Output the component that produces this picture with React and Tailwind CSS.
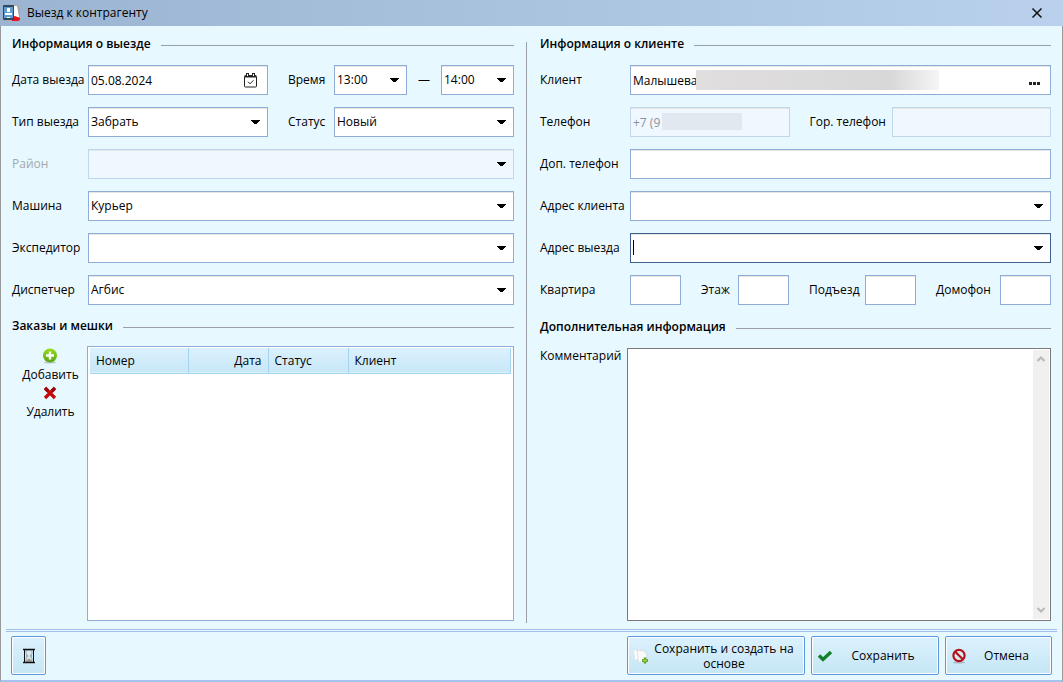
import { useState } from 'react';
import clsx from 'clsx';

const FIELD = 'h-[30px] w-full border px-[2px] outline-none shadow-[inset_0_1px_0_#e6e6e6]';
const FIELD_COLOR = 'border-[#8facd8] bg-white text-black';
const FIELD_FOCUS = 'border-[#3f618f] bg-white text-black';
const FIELD_DISABLED = 'border-[#c0d6ec] bg-[#f0f8ff] text-[#8b929b]';

function AppIcon() {
  return (
    <svg width="18" height="18" viewBox="0 0 18 18">
      <rect x="1" y="1" width="17" height="16" rx="3" fill="#a9a9a9" />
      <path d="M12 2h3l2 11h-5z" fill="#fff" />
      <path d="M10 13l3-1 5 2v2l-2 1h-6z" fill="#e8121c" />
      <rect x="1" y="1" width="11" height="15" rx="1" fill="#33475c" />
      <rect x="2" y="3" width="9" height="11" fill="#5f9bd0" />
      <rect x="5" y="4" width="3" height="4" fill="#fff" />
      <path d="M3 9h7v2H3zM5 13h3v1H5z" fill="#fff" />
    </svg>
  );
}

function CalendarIcon() {
  return (
    <svg width="14" height="15" viewBox="0 0 14 15" fill="none" stroke="#222">
      <rect x="0.5" y="2.5" width="12" height="11.5" rx="1" />
      <path d="M1 3.5h11" strokeWidth="2" />
      <path d="M3.5 0v4M9.5 0v4" strokeWidth="3" />
      <path d="M3.5 1v2M9.5 1v2" stroke="#fff" />
      <path d="M4 8.8l2 2 3.5-3.5" />
    </svg>
  );
}

function AddIcon() {
  return (
    <svg width="16" height="16" viewBox="0 0 16 16">
      <defs>
        <linearGradient id="add" x1="0" y1="0" x2="0" y2="1">
          <stop offset="0" stopColor="#97dc18" />
          <stop offset="1" stopColor="#57a51c" />
        </linearGradient>
      </defs>
      <ellipse cx="8" cy="14.5" rx="6" ry="1" fill="#b9c9cd" />
      <circle cx="8" cy="7.5" r="7" fill="url(#add)" />
      <path d="M8 3.5v8M4 7.5h8" stroke="#fff" strokeWidth="2.4" />
    </svg>
  );
}

function DeleteIcon() {
  return (
    <svg width="16" height="16" viewBox="0 0 16 16">
      <path d="M3 3l10 10M13 3L3 13" stroke="#c40808" strokeWidth="3.2" />
      <path d="M3 3l3 3M13 3l-3 3" stroke="#9b0a0a" strokeWidth="3.2" />
    </svg>
  );
}

function HourglassIcon() {
  return (
    <svg width="14" height="16" viewBox="0 0 14 16">
      <path d="M4 2h6v3.5L8 8l2 2.5V14H4v-3.5L6 8 4 5.500z" fill="#dbe8ee" stroke="#8296a0" strokeWidth="0.8" />
      <path d="M4 5.500L6 8l-2 2.500zM10 5.500L8 8l2 2.500z" fill="#9db2bc" />
      <path d="M4.500 14h5v-2L7 10.500l-2.500 1.500z" fill="#a09c8a" />
      <path d="M2.500 1v14M11.500 1v14" stroke="#111" />
      <path d="M1 1.500h12M1 14.500h12" stroke="#111" strokeWidth="1.6" />
    </svg>
  );
}

function CopyIcon() {
  return (
    <svg width="16" height="16" viewBox="0 0 16 16">
      <path d="M0.5 2.5l7-1.500 2 10-7.500 1z" fill="#fff" stroke="#dde3e6" strokeWidth="0.8" />
      <path d="M4 2.500h6l3.500 3V13l-8 1.500z" fill="#fafafa" stroke="#d3d9dc" strokeWidth="0.8" />
      <path d="M12 9.500v6M9 12.500h6" stroke="#4f9616" strokeWidth="2.4" />
      <path d="M12 10.500v4M10 12.500h4" stroke="#b5e34c" strokeWidth="0.8" />
    </svg>
  );
}

function CheckIcon() {
  return (
    <svg width="16" height="16" viewBox="0 0 16 16">
      <path d="M2 7.5l4 4 8-7.5" fill="none" stroke="#14802b" strokeWidth="3.4" />
    </svg>
  );
}

function ForbiddenIcon() {
  return (
    <svg width="16" height="16" viewBox="0 0 16 16">
      <ellipse cx="8" cy="14.5" rx="6" ry="1" fill="#a9b9c0" />
      <circle cx="8" cy="7.5" r="5.6" fill="#dceaf1" stroke="#b3141c" strokeWidth="2.2" />
      <path d="M4.2 3.7l7.6 7.6" stroke="#b3141c" strokeWidth="2.2" />
    </svg>
  );
}

function Arrow() {
  return (
    <svg
      className="pointer-events-none absolute top-[13px] right-2"
      width="9"
      height="5"
      viewBox="0 0 9 5"
      shapeRendering="crispEdges"
    >
      <path d="M0 0h9v1H8v1H7v1H6v1H3V3H2V2H1V1H0z" fill="#000" />
    </svg>
  );
}

function Section({ title, className }) {
  return (
    <div className={clsx('flex h-5 items-center gap-[10px]', className)}>
      <h2 className="font-semibold whitespace-nowrap">{title}</h2>
      <div className="mt-[2px] h-px flex-1 bg-[#9a9fac]" />
    </div>
  );
}

function Label({ id, className, children }) {
  return (
    <label htmlFor={id} className={clsx('shrink-0 whitespace-nowrap', className)}>
      {children}
    </label>
  );
}

function Input({ id, value = '', disabled, className }) {
  return (
    <div className={clsx('min-w-0', className)}>
      <input
        id={id}
        type="text"
        defaultValue={value}
        disabled={disabled}
        className={clsx(FIELD, disabled ? FIELD_DISABLED : FIELD_COLOR)}
      />
    </div>
  );
}

function Select({ id, options = [''], disabled, label, className }) {
  return (
    <div className={clsx('relative min-w-0', className)}>
      <select
        id={id}
        aria-label={label}
        disabled={disabled}
        className={clsx(FIELD, 'appearance-none opacity-100', disabled ? FIELD_DISABLED : FIELD_COLOR)}
      >
        {options.map((o) => (
          <option key={o}>{o}</option>
        ))}
      </select>
      <Arrow />
    </div>
  );
}

function ActionButton({ icon, label, className, children }) {
  return (
    <button
      type="button"
      aria-label={label}
      className={clsx(
        'flex h-[39px] items-center rounded-xs border border-[#5c97dd] bg-linear-to-b from-[#dcf1fe] to-[#c5e6f5] leading-[15px] shadow-[inset_0_0_0_1px_#fff]',
        className
      )}
    >
      {icon}
      {children && <span className="flex-1 text-center">{children}</span>}
    </button>
  );
}

function TripInfo() {
  const row = 'flex items-center';
  return (
    <div className="flex flex-col gap-3">
      <div className={row}>
        <Label id="date" className="w-[76px]">Дата выезда</Label>
        <div className="relative min-w-0 flex-1">
          <input id="date" type="text" defaultValue="05.08.2024" className={clsx(FIELD, FIELD_COLOR)} />
          <button type="button" aria-label="Календарь" className="absolute top-2 right-[10px]">
            <CalendarIcon />
          </button>
        </div>
        <Label id="timeFrom" className="ml-5 w-[46px]">Время</Label>
        <div className="flex flex-1 items-center justify-between">
          <Select id="timeFrom" options={['13:00']} className="w-[73px]" />
          <span>—</span>
          <Select label="Время до" options={['14:00']} className="w-[73px]" />
        </div>
      </div>
      <div className={row}>
        <Label id="type" className="w-[76px]">Тип выезда</Label>
        <Select id="type" options={['Забрать']} className="flex-1" />
        <Label id="status" className="ml-5 w-[46px]">Статус</Label>
        <Select id="status" options={['Новый']} className="flex-1" />
      </div>
      <div className={row}>
        <Label id="district" className="w-[76px] text-[#a3a9ad]">Район</Label>
        <Select id="district" disabled className="flex-1" />
      </div>
      <div className={row}>
        <Label id="car" className="w-[76px]">Машина</Label>
        <Select id="car" options={['Курьер']} className="flex-1" />
      </div>
      <div className={row}>
        <Label id="forwarder" className="w-[76px]">Экспедитор</Label>
        <Select id="forwarder" className="flex-1" />
      </div>
      <div className={row}>
        <Label id="dispatcher" className="w-[76px]">Диспетчер</Label>
        <Select id="dispatcher" options={['Агбис']} className="flex-1" />
      </div>
    </div>
  );
}

function Orders() {
  const th = 'border-r border-[#a5d4ee] px-[6px] pt-[2px] font-normal';
  return (
    <div className="flex flex-1">
      <div className="flex w-[75px] shrink-0 flex-col items-center pt-[2px] pl-[2px]">
        <button type="button" className="flex h-[37px] flex-col items-center leading-[21px]">
          <AddIcon />
          Добавить
        </button>
        <button type="button" className="flex h-[37px] flex-col items-center leading-[21px]">
          <DeleteIcon />
          Удалить
        </button>
      </div>
      <div className="flex-1 border border-[#8facd8] bg-white px-[2px] pt-px">
        <table className="w-full table-fixed border-collapse">
          <thead>
            <tr className="h-[25px] border-b border-[#a5d4ee] bg-linear-to-b from-[#dcf1fe] to-[#c7e7f7]">
              <th className={clsx(th, 'w-[98px] text-left')}>Номер</th>
              <th className={clsx(th, 'w-[80px] text-right')}>Дата</th>
              <th className={clsx(th, 'w-[80px] text-left')}>Статус</th>
              <th className={clsx(th, 'text-left')}>Клиент</th>
            </tr>
          </thead>
          <tbody />
        </table>
      </div>
    </div>
  );
}

function ClientInfo() {
  const [address, setAddress] = useState('');
  const row = 'flex items-center';
  return (
    <div className="flex flex-col gap-3">
      <div className={row}>
        <Label id="client" className="w-[90px]">Клиент</Label>
        <div className="relative min-w-0 flex-1">
          <input id="client" type="text" defaultValue="Малышева" className={clsx(FIELD, FIELD_COLOR)} />
          {/* hidden part of the name */}
          <div className="absolute top-[5px] left-[66px] h-5 w-[243px] bg-linear-to-r from-[#e0dedf] via-[#d9d8d9] via-80% to-[#f5f5f5]" />
          <button type="button" aria-label="Выбрать клиента" className="absolute top-[17px] right-[11px] flex gap-px">
            <span className="size-[3px] bg-[#222]" />
            <span className="size-[3px] bg-[#222]" />
            <span className="size-[3px] bg-[#222]" />
          </button>
        </div>
      </div>
      <div className={row}>
        <Label id="phone" className="w-[90px]">Телефон</Label>
        <div className="relative min-w-0 flex-1">
          <input id="phone" type="text" disabled defaultValue="+7 (9" className={clsx(FIELD, FIELD_DISABLED)} />
          <div className="absolute top-[6px] left-[32px] h-[17px] w-[80px] bg-[#e1e8f0]" />
        </div>
        <Label id="cityPhone" className="ml-5 w-[82px]">Гор. телефон</Label>
        <Input id="cityPhone" disabled className="flex-1" />
      </div>
      <div className={row}>
        <Label id="extraPhone" className="w-[90px]">Доп. телефон</Label>
        <Input id="extraPhone" className="flex-1" />
      </div>
      <div className={row}>
        <Label id="clientAddress" className="w-[90px]">Адрес клиента</Label>
        <Select id="clientAddress" className="flex-1" />
      </div>
      <div className={row}>
        <Label id="tripAddress" className="w-[90px]">Адрес выезда</Label>
        <div className="relative min-w-0 flex-1">
          <input
            id="tripAddress"
            type="text"
            value={address}
            onChange={(e) => setAddress(e.target.value)}
            className={clsx(FIELD, FIELD_FOCUS)}
          />
          {!address && <div className="pointer-events-none absolute top-[7px] left-[3px] h-[15px] w-px bg-black" />}
          <Arrow />
        </div>
      </div>
      <div className={row}>
        <Label id="flat" className="w-[90px]">Квартира</Label>
        <Input id="flat" className="flex-1" />
        <Label id="floor" className="ml-5 w-[37px]">Этаж</Label>
        <Input id="floor" className="flex-1" />
        <Label id="entrance" className="ml-5 w-[56px]">Подъезд</Label>
        <Input id="entrance" className="flex-1" />
        <Label id="intercom" className="ml-5 w-[64px]">Домофон</Label>
        <Input id="intercom" className="flex-1" />
      </div>
    </div>
  );
}

function Comment() {
  return (
    <div className="flex flex-1">
      <Label id="comment" className="w-[87px]">Комментарий</Label>
      <div className="flex flex-1 border border-[#7a7a7a] bg-white p-px">
        <textarea id="comment" className="min-w-0 flex-1 resize-none p-1 outline-none" />
        <div className="flex w-4 flex-col items-center justify-between bg-[#f0f0f0] py-[6px]">
          <svg width="8" height="6" viewBox="0 0 8 6" fill="none" stroke="#b8b8b8" strokeWidth="2">
            <path d="M0.5 5L4 1.5 7.5 5" />
          </svg>
          <svg width="8" height="6" viewBox="0 0 8 6" fill="none" stroke="#b8b8b8" strokeWidth="2">
            <path d="M0.5 1L4 4.5 7.5 1" />
          </svg>
        </div>
      </div>
    </div>
  );
}

export default function App() {
  return (
    <div className="flex min-h-screen flex-col bg-[#e8f8ff] font-['Open_Sans','Noto_Sans',sans-serif] text-[12px] leading-4 text-black">
      {/* Title bar */}
      <header className="flex h-[26px] items-center bg-linear-to-r from-[#9bb4d1] to-[#b9d1ec] pr-5 pl-[2px]">
        <AppIcon />
        <h1 className="ml-[7px] flex-1">Выезд к контрагенту</h1>
        <button type="button" aria-label="Закрыть">
          <svg width="12" height="12" viewBox="0 0 12 12" stroke="#111" strokeWidth="1.5">
            <path d="M1.5 1.5l9 9M10.5 1.5l-9 9" />
          </svg>
        </button>
      </header>

      <div className="flex flex-1 flex-col border-x border-b-2 border-x-[#9a9a9a] border-b-[#a5c3ee]">
        <main className="flex flex-1 px-[11px] pt-2 pb-2">
          <div className="flex min-w-0 flex-[502] flex-col">
            <Section title="Информация о выезде" className="mb-[11px]" />
            <TripInfo />
            <Section title="Заказы и мешки" className="mt-[11px] mb-[10px]" />
            <Orders />
          </div>
          <div className="mt-2 mr-[13px] -mb-[2px] ml-3 w-px bg-[#9a9fac]" />
          <div className="flex min-w-0 flex-[511] flex-col">
            <Section title="Информация о клиенте" className="mb-[11px]" />
            <ClientInfo />
            <Section title="Дополнительная информация" className="mt-3 mb-[11px]" />
            <Comment />
          </div>
        </main>

        {/* Buttons */}
        <footer className="mx-[5px] flex justify-between border-t-3 border-double border-[#a0c0e8] px-[5px] pt-1 pb-[5px]">
          <ActionButton icon={<HourglassIcon />} label="История" className="w-[35px] justify-center" />
          <div className="flex gap-[6px]">
            <ActionButton icon={<CopyIcon />} className="w-[178px] px-[5px]">
              Сохранить и создать на основе
            </ActionButton>
            <ActionButton icon={<CheckIcon />} className="w-[128px] px-[5px]">
              Сохранить
            </ActionButton>
            <ActionButton icon={<ForbiddenIcon />} className="w-[107px] px-[5px]">
              Отмена
            </ActionButton>
          </div>
        </footer>
      </div>
    </div>
  );
}
